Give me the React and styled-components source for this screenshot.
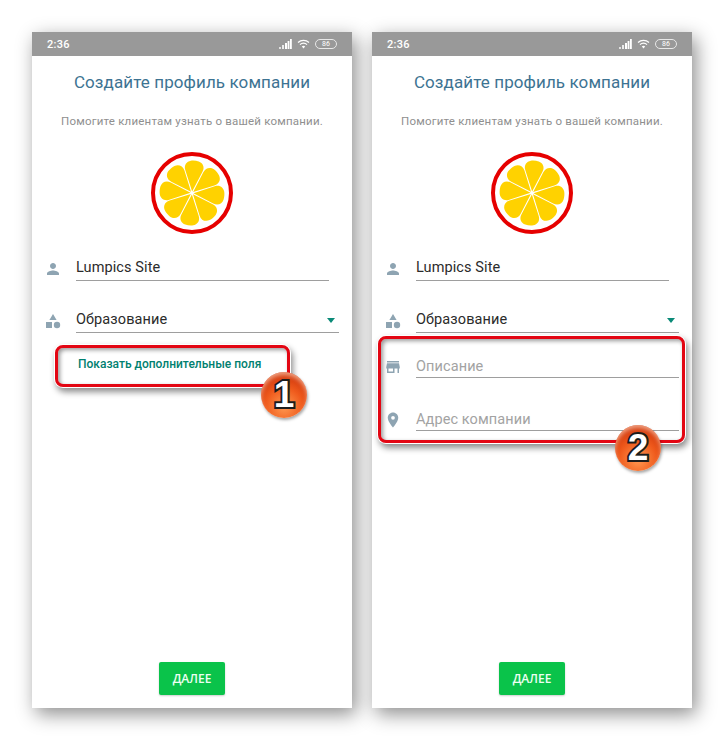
import React from "react";
import styled, { createGlobalStyle } from "styled-components";
import { MdPerson, MdStore, MdLocationOn } from "react-icons/md";

const Global = createGlobalStyle`
  html, body {
    margin: 0;
    background: #ffffff;
  }
  body {
    font-family: Roboto, "Noto Sans", sans-serif;
  }
`;

const SLICE =
  "M0 -1.5 L-8.6 -22 C-10.8 -27 -8 -31 -4 -32 C-1.5 -32.6 1.5 -32.6 4 -32 C8 -31 10.8 -27 8.6 -22Z";

const Lemon = () => (
  <LemonSvg viewBox="-42 -42 84 84">
    <circle cx="0" cy="0" r="39" fill="#fff" stroke="#e60000" strokeWidth="4" />
    {[0, 1, 2, 3, 4, 5, 6, 7].map(i => (
      <path key={i} d={SLICE} fill="#ffd200" transform={`rotate(${5 + i * 45})`} />
    ))}
  </LemonSvg>
);

const CategoryIcon = () => (
  <svg width="16" height="16" viewBox="0 0 16 16" fill="#8ea4b2">
    <path d="M8 1l3.6 6H4.4z" />
    <rect x="1" y="9" width="6" height="6" />
    <circle cx="12" cy="12" r="3.2" />
  </svg>
);

const StatusIcons = () => (
  <StatusRight>
    <svg width="13" height="10" viewBox="0 0 13 10" fill="#fff">
      <rect x="0" y="8" width="2" height="2" opacity=".7" />
      <rect x="3" y="6" width="2" height="4" opacity=".8" />
      <rect x="6" y="4" width="2" height="6" />
      <rect x="8.6" y="2" width="1.8" height="8" />
      <rect x="11" y="0" width="1.8" height="10" />
    </svg>
    <svg width="13" height="10" viewBox="0 0 13 10" fill="none" stroke="#fff">
      <path d="M1 3.5a8 8 0 0 1 11 0" strokeWidth="1.2" />
      <path d="M3 5.6a5 5 0 0 1 7 0" strokeWidth="1.2" />
      <path d="M6.5 9.4L4.8 7.6a2.4 2.4 0 0 1 3.4 0z" fill="#fff" stroke="none" />
    </svg>
    <Battery>86</Battery>
  </StatusRight>
);

const Phone = ({ extra, children }) => (
  <PhoneFrame>
    <StatusBar>
      <Clock>2:36</Clock>
      <StatusIcons />
    </StatusBar>
    <Content>
      <Title>Создайте профиль компании</Title>
      <Subtitle>Помогите клиентам узнать о вашей компании.</Subtitle>
      <Lemon />
      <Field $top={21} $short icon={<MdPerson size={22} />}>
        Lumpics Site
      </Field>
      <FieldRow $top={27} $right={13}>
        <IconSlot>
          <CategoryIcon />
        </IconSlot>
        <InputLine>
          Образование
          <Caret />
        </InputLine>
      </FieldRow>
      {extra}
      <Spacer />
      <NextButton>ДАЛЕЕ</NextButton>
    </Content>
    {children}
  </PhoneFrame>
);

const Field = ({ $top, $short, $hint, icon, children }) => (
  <FieldRow $top={$top} $right={$short ? 23 : 13}>
    <IconSlot>{icon}</IconSlot>
    <InputLine $hint={$hint}>{children}</InputLine>
  </FieldRow>
);

const App = () => (
  <>
    <Global />
    <Page>
      <Phone extra={<ShowMore>Показать дополнительные поля</ShowMore>}>
        <Highlight $left={23} $top={313} $width={235} $height={42} />
        <Badge $left={229} $top={340}>1</Badge>
      </Phone>
      <Phone
        extra={
          <>
            <Field $top={22} $hint icon={<MdStore size={22} />}>
              Описание
            </Field>
            <Field $top={30} $hint icon={<MdLocationOn size={18} />}>
              Адрес компании
            </Field>
          </>
        }
      >
        <Highlight $left={6} $top={304} $width={307} $height={107} />
        <Badge $left={243} $top={393}>2</Badge>
      </Phone>
    </Page>
  </>
);

export default App;

const Page = styled.div`
  display: flex;
  gap: 20px;
  width: 724px;
  height: 740px;
  box-sizing: border-box;
  padding: 32px;
  overflow: hidden;
`;
const PhoneFrame = styled.div`
  position: relative;
  display: flex;
  flex-direction: column;
  width: 320px;
  height: 676px;
  background: #ffffff;
  box-shadow: 4px 6px 18px rgba(0, 0, 0, 0.45);
`;
const StatusBar = styled.div`
  display: flex;
  align-items: center;
  justify-content: space-between;
  height: 24px;
  padding: 0 15px;
  background: #999999;
  color: #ffffff;
`;
const Clock = styled.span`
  font-size: 11px;
  font-weight: 500;
  letter-spacing: 0.3px;
`;
const StatusRight = styled.div`
  display: flex;
  align-items: center;
  gap: 5px;
`;
const Battery = styled.span`
  display: flex;
  align-items: center;
  justify-content: center;
  width: 20px;
  height: 8px;
  border: 1px solid #e8e8e8;
  border-radius: 5px;
  font-size: 7px;
  line-height: 8px;
  color: #ffffff;
`;
const Content = styled.div`
  flex: 1;
  display: flex;
  flex-direction: column;
  align-items: center;
  padding-bottom: 13px;
`;
const Title = styled.h1`
  margin: 16px 0 0;
  font-size: 17px;
  line-height: 20px;
  font-weight: 400;
  color: #3d7392;
  letter-spacing: 0.1px;
`;
const Subtitle = styled.p`
  margin: 22px 0 0;
  font-size: 11.5px;
  line-height: 14px;
  color: #8f8f8f;
  letter-spacing: 0.2px;
`;
const LemonSvg = styled.svg`
  width: 84px;
  height: 84px;
  margin-top: 23px;
`;
const FieldRow = styled.div`
  align-self: stretch;
  display: flex;
  align-items: center;
  margin-top: ${p => p.$top}px;
  padding: 0 ${p => p.$right}px 0 12px;
`;
const IconSlot = styled.div`
  display: flex;
  align-items: center;
  justify-content: center;
  width: 18px;
  height: 18px;
  margin-right: 14px;
  color: #8ea4b2;
`;
const InputLine = styled.div`
  flex: 1;
  position: relative;
  height: ${p => (p.$hint ? 22 : 24)}px;
  line-height: 24px;
  font-size: 14.5px;
  letter-spacing: 0.1px;
  color: ${p => (p.$hint ? "#a3a3a3" : "#2b2b2b")};
  border-bottom: 1px solid #9e9e9e;
`;
const Caret = styled.span`
  position: absolute;
  right: 4px;
  top: 10px;
  border-left: 4px solid transparent;
  border-right: 4px solid transparent;
  border-top: 5px solid #0a8a78;
`;
const ShowMore = styled.button`
  align-self: flex-start;
  margin: 24px 0 0 46px;
  padding: 0;
  border: none;
  background: none;
  font-family: inherit;
  font-size: 12px;
  line-height: 14px;
  font-weight: 500;
  color: #00806f;
`;
const Spacer = styled.div`
  flex: 1;
`;
const NextButton = styled.button`
  width: 66px;
  height: 33px;
  border: none;
  border-radius: 2px;
  background: #0ac34a;
  color: #ecfff2;
  font-family: "Open Sans", sans-serif;
  font-size: 12px;
  font-weight: 600;
  box-shadow: 0 1px 2px rgba(0, 0, 0, 0.2);
`;
const Highlight = styled.div`
  position: absolute;
  left: ${p => p.$left}px;
  top: ${p => p.$top}px;
  width: ${p => p.$width}px;
  height: ${p => p.$height}px;
  box-sizing: border-box;
  border: 3px solid #e30613;
  border-radius: 8px;
  box-shadow: 0 0 0 1px #ffffff, 2px 4px 6px 1px rgba(0, 0, 0, 0.45),
    inset 2px 2px 4px rgba(0, 0, 0, 0.4);
`;
const Badge = styled.div`
  position: absolute;
  left: ${p => p.$left}px;
  top: ${p => p.$top}px;
  width: 46px;
  height: 46px;
  display: flex;
  align-items: center;
  justify-content: center;
  border-radius: 50%;
  background: radial-gradient(circle at 50% 75%, #ff9a52 0%, #ef5a1c 45%, #c92f0a 85%, #a92306 100%);
  box-shadow: inset 0 3px 4px rgba(255, 210, 180, 0.7), 1px 2px 3px rgba(0, 0, 0, 0.35);
  font-family: "Liberation Sans", sans-serif;
  font-size: 37px;
  font-weight: 700;
  color: #ffffff;
  -webkit-text-stroke: 4px #1c1c1c;
  paint-order: stroke fill;
`;
